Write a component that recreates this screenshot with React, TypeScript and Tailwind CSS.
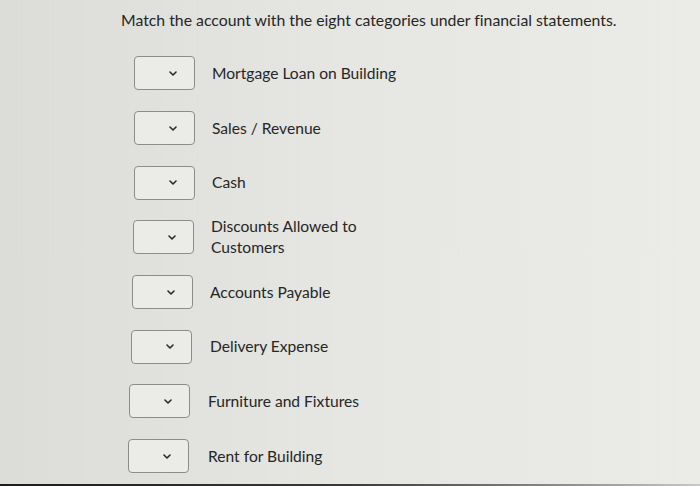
const items: { label: React.ReactNode; ml: string; gap: string }[] = [
  { label: "Mortgage Loan on Building", ml: "ml-[134px]", gap: "gap-[17px]" },
  { label: "Sales / Revenue", ml: "ml-[134px]", gap: "gap-[17px]" },
  { label: "Cash", ml: "ml-[134px]", gap: "gap-[17px]" },
  {
    label: (
      <>
        Discounts Allowed to
        <br />
        Customers
      </>
    ),
    ml: "ml-[133px]",
    gap: "gap-[17px]",
  },
  { label: "Accounts Payable", ml: "ml-[132px]", gap: "gap-[17px]" },
  { label: "Delivery Expense", ml: "ml-[131px]", gap: "gap-[18px]" },
  { label: "Furniture and Fixtures", ml: "ml-[129px]", gap: "gap-[18px]" },
  { label: "Rent for Building", ml: "ml-[128px]", gap: "gap-[19px]" },
];

const SelectBox = () => (
  <div className="flex h-[34px] w-[61px] shrink-0 items-center justify-end rounded-[4px] border border-[#8c8c8a] bg-[#ebebe8] pr-[17px]">
    <svg width="8" height="5" viewBox="0 0 8 5" fill="none">
      <polyline points="1,1 4,4 7,1" stroke="#2b2b2b" strokeWidth="1.6" strokeLinecap="round" strokeLinejoin="round" />
    </svg>
  </div>
);

export default function App() {
  return (
    <div
      className="flex h-[486px] w-[700px] flex-col overflow-hidden bg-gradient-to-r from-[#dcdcd8] via-[#e6e6e2] to-[#ebebe7] text-[#262626]"
      style={{ fontFamily: "Lato, 'Open Sans', sans-serif", fontVariantLigatures: "none" }}
    >
      <h1 className="pl-[121px] pt-[8px] text-[15.8px] leading-[24px] font-normal">
        Match the account with the eight categories under financial statements.
      </h1>

      <div className="mt-[14px] flex flex-col">
        {items.map((item, i) => (
          <div key={i} className={`flex h-[54.7px] items-center ${item.ml} ${item.gap}`}>
            <SelectBox />
            <span className="text-[15.6px] leading-[21px]">{item.label}</span>
          </div>
        ))}
      </div>

      <div className="mt-auto h-[5px] w-full bg-gradient-to-r from-[#1c1c1c] via-[#3a3a3a] to-[#c8c8c4]" />
    </div>
  );
}
